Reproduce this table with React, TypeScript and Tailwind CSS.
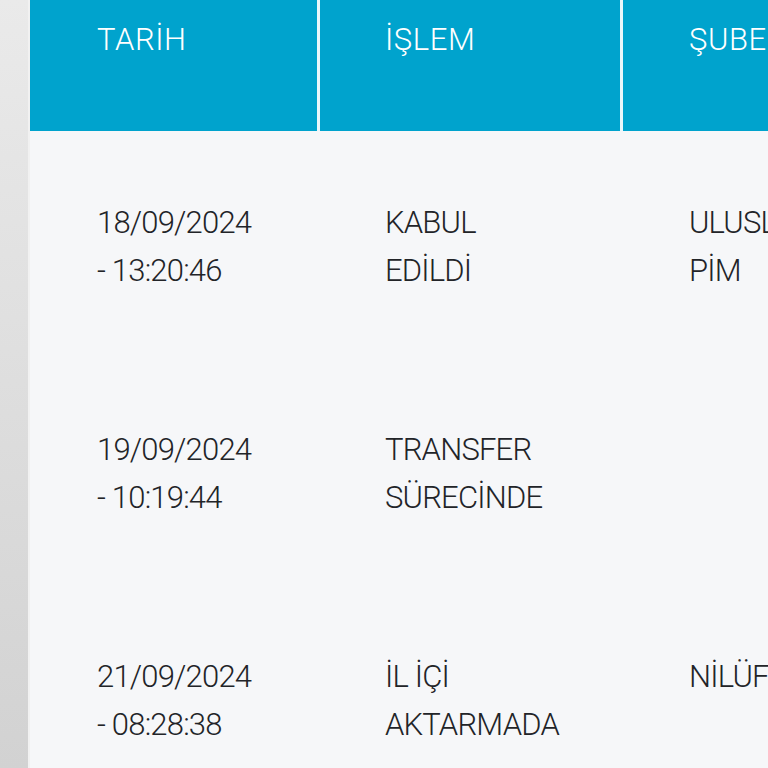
import React from "react";

// ---------------------------------------------------------------------------
// Data
// ---------------------------------------------------------------------------

interface Row {
  date: string;
  time: string;
  status: string[];
  branch: string[];
}

const ROWS: Row[] = [
  { date: "18/09/2024", time: "- 13:20:46", status: ["KABUL", "EDİLDİ"], branch: ["ULUSLARARASI", "PİM"] },
  { date: "19/09/2024", time: "- 10:19:44", status: ["TRANSFER", "SÜRECİNDE"], branch: [] },
  { date: "21/09/2024", time: "- 08:28:38", status: ["İL İÇİ", "AKTARMADA"], branch: ["NİLÜFER"] },
];

// ---------------------------------------------------------------------------
// Page
// ---------------------------------------------------------------------------

function Lines({ lines }: { lines: string[] }) {
  return (
    <div className="flex flex-col">
      {lines.map((l, i) => (
        <span key={i} className="whitespace-nowrap">
          {l}
        </span>
      ))}
    </div>
  );
}

export default function App() {
  return (
    <div
      className="w-[768px] h-[768px] overflow-hidden flex bg-[#f6f7f9]"
      style={{ fontFamily: "Roboto, Lato, sans-serif" }}
    >
      {/* left gutter */}
      <div className="w-[28px] shrink-0 bg-gradient-to-b from-[#eaeaea] to-[#d2d2d2]" />
      <div className="w-[2px] shrink-0 bg-[#f1f1f1]" />

      <div className="flex-1 flex flex-col min-w-0">
        {/* Header */}
        <div className="flex shrink-0 h-[131px] bg-[#00a3cd] text-white text-[31px] font-light leading-none tracking-[0.6px]">
          <div className="w-[290px] shrink-0 pl-[67px] pt-[24px] border-r-[3px] border-[#e9f7fb]">TARİH</div>
          <div className="w-[303px] shrink-0 pl-[65px] pt-[24px] border-r-[3px] border-[#e9f7fb]">İŞLEM</div>
          <div className="flex-1 pl-[66px] pt-[24px] whitespace-nowrap overflow-hidden">ŞUBE</div>
        </div>

        {/* Body */}
        {ROWS.map((r, i) => (
          <div
            key={i}
            className="flex shrink-0 h-[227px] items-start pt-[68px] text-[#222428] text-[31px] font-light leading-[48px] tracking-[-0.8px]"
          >
            <div className="w-[290px] shrink-0 pl-[67px]">
              <Lines lines={[r.date, r.time]} />
            </div>
            <div className="w-[303px] shrink-0 pl-[65px]">
              <Lines lines={r.status} />
            </div>
            <div className="flex-1 pl-[66px] overflow-hidden">
              <Lines lines={r.branch} />
            </div>
          </div>
        ))}
      </div>
    </div>
  );
}
